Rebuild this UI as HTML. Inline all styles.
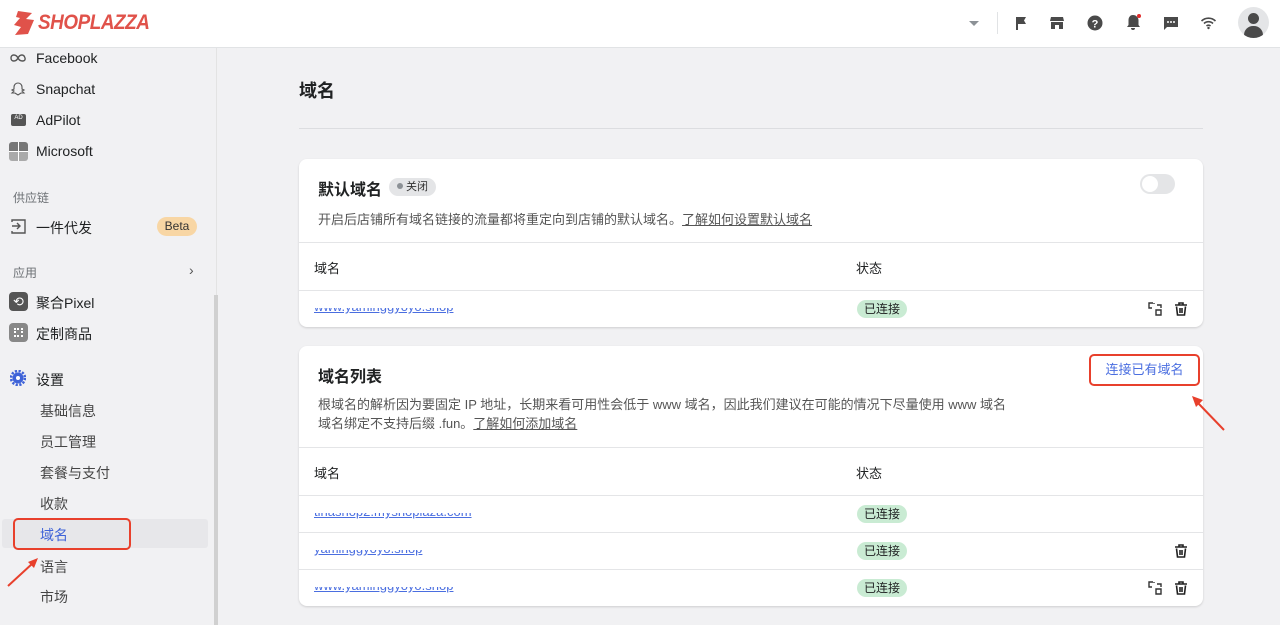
<!DOCTYPE html>
<html><head><meta charset="utf-8">
<style>
*{box-sizing:border-box;margin:0;padding:0}
body{width:1280px;height:621px;overflow:hidden;background:#f1f1f3;font-family:"Liberation Sans","Noto Sans CJK SC",sans-serif;position:relative;color:#202223}
.a{position:absolute}
.hdr{left:0;top:0;width:1280px;height:48px;background:#fff;border-bottom:1px solid #e1e3e5}
.side{left:0;top:48px;width:217px;height:573px;background:#f1f1f3;border-right:1px solid #e3e3e3}
.nav{font-size:14px;color:#202223;left:36px}
.sub{font-size:14px;color:#454545;left:40px}
.sec{font-size:12px;color:#6d7175;left:13px}
.card{background:#fff;border-radius:8px;box-shadow:0 1px 2px rgba(0,0,0,.15);left:299px;width:904px}
.line{left:0;width:904px;height:1px;background:#e4e5e7}
.th{font-size:13px;color:#202223}
.badge{background:#c9ebd3;color:#202223;font-size:12px;border-radius:10px;padding:0 7px;height:18px;line-height:18px}
.clip{overflow:hidden;height:7px}
.clip span{display:block;font-size:13px;color:#4a6ee0;text-decoration:underline;line-height:14px;margin-top:-8px}
.ic{width:14px;height:14px}
</style></head><body>
<div class="a hdr">
 <svg class="a" style="left:12px;top:10px" width="24" height="26" viewBox="0 0 24 26"><path d="M6 1 L20 3 L14 9 L22 10 L16 24 L3 25 L9 17 L2 15 L8 8 L4 7Z" fill="#e0524a"/></svg>
 <div class="a" style="left:38px;top:11px;font:italic bold 21px 'Liberation Sans',sans-serif;color:#e0524a;letter-spacing:-0.5px;transform:scaleX(0.9);transform-origin:left">SHOPLAZZA</div>
 <div class="a" style="left:969px;top:21px;width:0;height:0;border-left:5px solid transparent;border-right:5px solid transparent;border-top:5px solid #8c9196"></div>
 <div class="a" style="left:997px;top:12px;width:1px;height:22px;background:#e1e3e5"></div>
 <svg class="a" style="left:1013px;top:15px" width="16" height="16" viewBox="0 0 16 16"><path d="M3 2v13h2V9h8l-2-3.5L13 2z" fill="#4a4a4a"/></svg>
 <svg class="a" style="left:1049px;top:15px" width="16" height="16" viewBox="0 0 16 16"><path d="M2 2h12l1 4H1z M2 7h12v7h-4v-4H6v4H2z" fill="#4a4a4a"/></svg>
 <svg class="a" style="left:1087px;top:15px" width="16" height="16" viewBox="0 0 16 16"><circle cx="8" cy="8" r="7.5" fill="#4a4a4a"/><text x="8" y="12.5" font-size="11" font-weight="bold" fill="#fff" text-anchor="middle" font-family="Liberation Sans">?</text></svg>
 <svg class="a" style="left:1125px;top:13px" width="18" height="18" viewBox="0 0 18 18"><path d="M8 2c-3 0-4.5 2.5-4.5 5v5L2 14h13l-1.5-2V7C13.5 4.5 11 2 8 2z M6 15h4a2 2 0 0 1-4 0z" fill="#4a4a4a"/><circle cx="14" cy="3" r="2" fill="#e02b2b"/></svg>
 <svg class="a" style="left:1163px;top:15px" width="16" height="16" viewBox="0 0 16 16"><path d="M1 2h14v10H4l-3 3z" fill="#4a4a4a"/><circle cx="5" cy="7" r="1" fill="#fff"/><circle cx="8" cy="7" r="1" fill="#fff"/><circle cx="11" cy="7" r="1" fill="#fff"/></svg>
 <svg class="a" style="left:1200px;top:15px" width="17" height="16" viewBox="0 0 17 16"><path d="M1.5 6a10 10 0 0 1 14 0 M4 8.5a6.5 6.5 0 0 1 9 0 M6.5 11a3 3 0 0 1 4 0" stroke="#4a4a4a" stroke-width="1.6" fill="none"/><circle cx="8.5" cy="13" r="1.2" fill="#4a4a4a"/></svg>
 <div class="a" style="left:1238px;top:7px;width:31px;height:31px;border-radius:50%;background:#e4e5e7;overflow:hidden"><div class="a" style="left:10px;top:6px;width:11px;height:11px;border-radius:50%;background:#4a4a4a"></div><div class="a" style="left:6px;top:19px;width:19px;height:12px;border-radius:9px 9px 0 0;background:#4a4a4a"></div></div>
</div>
<div class="a side">
 <div class="a" style="left:214px;top:247px;width:4px;height:330px;background:#d0d0d0"></div>
</div>
<svg class="a" style="left:10px;top:53px" width="16" height="10" viewBox="0 0 16 10"><path d="M8 5C6 1 1 1 1 5s5 4 7 0 6-4 7 0-5 4-7 0" fill="none" stroke="#555" stroke-width="1.4"/></svg>
<div class="a nav" style="top:50px">Facebook</div>
<svg class="a" style="left:10px;top:81px" width="16" height="16" viewBox="0 0 16 16"><path d="M8 2c-2.5 0-4 2-4 4v2l-2 1 2 1-2 2h3l3 2 3-2h3l-2-2 2-1-2-1V6c0-2-1.5-4-4-4z" fill="none" stroke="#555" stroke-width="1.1"/></svg>
<div class="a nav" style="top:81px">Snapchat</div>
<div class="a" style="left:11px;top:114px;width:15px;height:12px;background:#555;border-radius:2px;font-size:6px;color:#fff;text-align:center;line-height:9px">AD</div>
<div class="a nav" style="top:112px">AdPilot</div>
<div class="a" style="left:9px;top:142px;width:19px;height:19px;border-radius:3px;background:linear-gradient(90deg,transparent 9px,#fff 9px,#fff 10px,transparent 10px),linear-gradient(#777 0,#777 9px,#fff 9px,#fff 10px,#aaa 10px)"></div>
<div class="a nav" style="top:143px">Microsoft</div>
<div class="a sec" style="top:189px">供应链</div>
<svg class="a" style="left:11px;top:219px" width="15" height="15" viewBox="0 0 15 15"><path d="M1 3V1h13v13H1v-2 M1 7h8 M6 4l3 3-3 3" fill="none" stroke="#555" stroke-width="1.4"/></svg>
<div class="a nav" style="top:218px">一件代发</div>
<div class="a" style="left:157px;top:217px;width:40px;height:19px;border-radius:10px;background:#f8d6a4;font-size:12px;line-height:19px;text-align:center;color:#333">Beta</div>
<div class="a sec" style="top:264px">应用</div>
<div class="a" style="left:189px;top:262px;font-size:14px;color:#555">›</div>
<div class="a" style="left:9px;top:292px;width:19px;height:19px;border-radius:4px;background:#555;color:#fff;font-size:13px;text-align:center;line-height:19px">⟲</div>
<div class="a nav" style="top:293px">聚合Pixel</div>
<div class="a" style="left:9px;top:323px;width:19px;height:19px;border-radius:4px;background:#888"><div class="a" style="left:5px;top:5px;width:9px;height:9px;border:2px dotted #fff"></div></div>
<div class="a nav" style="top:324px">定制商品</div>
<svg class="a" style="left:10px;top:370px" width="16" height="16" viewBox="0 0 16 16"><circle cx="8" cy="8" r="5.5" fill="#3f63d8"/><circle cx="8" cy="8" r="7" fill="none" stroke="#3f63d8" stroke-width="2.5" stroke-dasharray="2.2 1.5"/><circle cx="8" cy="8" r="2" fill="#fff"/></svg>
<div class="a nav" style="top:370px">设置</div>
<div class="a sub" style="top:401px">基础信息</div>
<div class="a sub" style="top:432px">员工管理</div>
<div class="a sub" style="top:463px">套餐与支付</div>
<div class="a sub" style="top:494px">收款</div>
<div class="a" style="left:2px;top:519px;width:206px;height:29px;background:#e7e7ea;border-radius:3px"></div>
<div class="a" style="left:13px;top:518px;width:118px;height:32px;border:2px solid #e8402c;border-radius:5px"></div>
<div class="a sub" style="top:525px;color:#3f63d8">域名</div>
<div class="a sub" style="top:557px">语言</div>
<div class="a sub" style="top:587px">市场</div>
<svg class="a" style="left:0;top:530px" width="45" height="60"><path d="M8 56 L33 33" stroke="#e8402c" stroke-width="2"/><path d="M38 28 L28 32 L34 38Z" fill="#e8402c"/></svg>

<div class="a" style="left:299px;top:77px;font-size:18px;font-weight:bold;color:#202223">域名</div>
<div class="a" style="left:299px;top:128px;width:904px;height:1px;background:#dcdde0"></div>

<div class="a card" style="top:159px;height:168px">
 <div class="a" style="left:19px;top:17px;font-size:16px;font-weight:bold">默认域名</div>
 <div class="a" style="left:90px;top:19px;height:18px;padding:0 8px;border-radius:9px;background:#e4e5e7;font-size:11px;line-height:18px;color:#333"><span style="display:inline-block;width:6px;height:6px;border-radius:50%;background:#8c9196;margin-right:3px;vertical-align:1px"></span>关闭</div>
 <div class="a" style="left:841px;top:15px;width:35px;height:20px;border-radius:10px;background:#e4e5e7"><div class="a" style="left:2px;top:2px;width:16px;height:16px;border-radius:50%;background:#fff"></div></div>
 <div class="a" style="left:19px;top:50px;font-size:13px;color:#555">开启后店铺所有域名链接的流量都将重定向到店铺的默认域名。<span style="text-decoration:underline">了解如何设置默认域名</span></div>
 <div class="a line" style="top:83px"></div>
 <div class="a th" style="left:15px;top:99px">域名</div>
 <div class="a th" style="left:557px;top:99px">状态</div>
 <div class="a line" style="top:131px"></div>
 <div class="a clip" style="left:15px;top:149px;width:300px"><span>www.yaminggyoyo.shop</span></div>
 <div class="a badge" style="left:558px;top:141px">已连接</div>
 <svg class="a ic" style="left:849px;top:143px" viewBox="0 0 14 14"><path d="M5 1H1v5h3 M6 1v1 M8 8h5v5H8z M9 3h4v3" fill="none" stroke="#333" stroke-width="1.4"/></svg>
 <svg class="a ic" style="left:875px;top:143px" viewBox="0 0 14 14"><path d="M1 3h12 M5 3V1h4v2 M2.5 4.5l1 8.5h7l1-8.5 M6 6v5 M8 6v5" fill="none" stroke="#222" stroke-width="1.6"/></svg>
</div>

<div class="a card" style="top:346px;height:260px">
 <div class="a" style="left:19px;top:17px;font-size:16px;font-weight:bold">域名列表</div>
 <div class="a" style="left:790px;top:8px;width:111px;height:32px;border:2px solid #e8402c;border-radius:5px;font-size:13px;color:#4a6ee0;text-align:center;line-height:28px">连接已有域名</div>
 <div class="a" style="left:19px;top:49px;font-size:13px;color:#555;line-height:19px">根域名的解析因为要固定 IP 地址，长期来看可用性会低于 www 域名，因此我们建议在可能的情况下尽量使用 www 域名<br>域名绑定不支持后缀 .fun。<span style="text-decoration:underline">了解如何添加域名</span></div>
 <div class="a line" style="top:101px"></div>
 <div class="a th" style="left:15px;top:117px">域名</div>
 <div class="a th" style="left:557px;top:117px">状态</div>
 <div class="a line" style="top:149px"></div>
 <div class="a clip" style="left:15px;top:167px;width:300px"><span>tinashop2.myshoplaza.com</span></div>
 <div class="a badge" style="left:558px;top:159px">已连接</div>
 <div class="a line" style="top:186px"></div>
 <div class="a clip" style="left:15px;top:204px;width:300px"><span>yaminggyoyo.shop</span></div>
 <div class="a badge" style="left:558px;top:196px">已连接</div>
 <svg class="a ic" style="left:875px;top:198px" viewBox="0 0 14 14"><path d="M1 3h12 M5 3V1h4v2 M2.5 4.5l1 8.5h7l1-8.5 M6 6v5 M8 6v5" fill="none" stroke="#222" stroke-width="1.6"/></svg>
 <div class="a line" style="top:223px"></div>
 <div class="a clip" style="left:15px;top:241px;width:300px"><span>www.yaminggyoyo.shop</span></div>
 <div class="a badge" style="left:558px;top:233px">已连接</div>
 <svg class="a ic" style="left:849px;top:235px" viewBox="0 0 14 14"><path d="M5 1H1v5h3 M6 1v1 M8 8h5v5H8z M9 3h4v3" fill="none" stroke="#333" stroke-width="1.4"/></svg>
 <svg class="a ic" style="left:875px;top:235px" viewBox="0 0 14 14"><path d="M1 3h12 M5 3V1h4v2 M2.5 4.5l1 8.5h7l1-8.5 M6 6v5 M8 6v5" fill="none" stroke="#222" stroke-width="1.6"/></svg>
</div>
<svg class="a" style="left:1185px;top:390px" width="45" height="45"><path d="M39 40 L13 13" stroke="#e8402c" stroke-width="2"/><path d="M7 6 L18 10 L11 17Z" fill="#e8402c"/></svg>
</body></html>
